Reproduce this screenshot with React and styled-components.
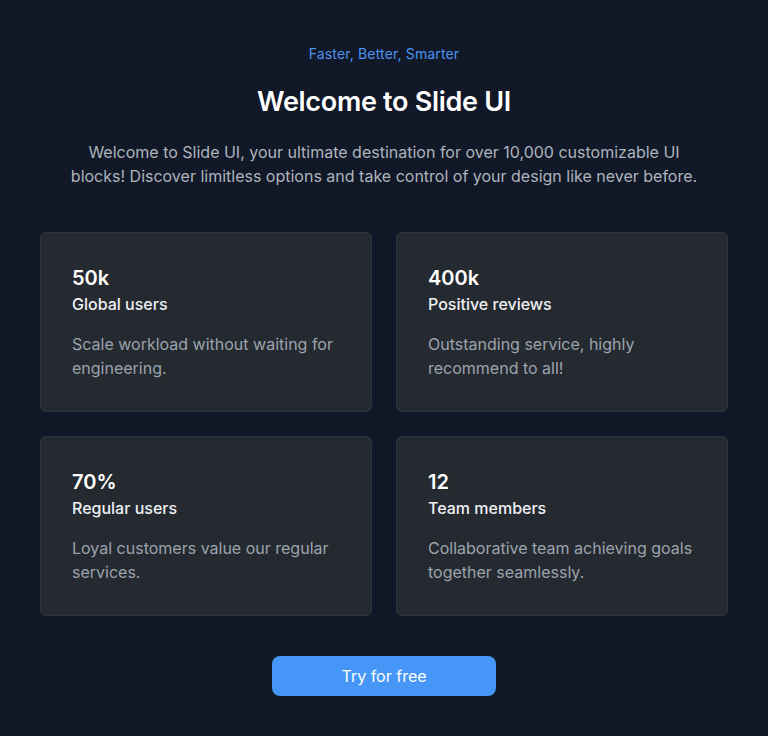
import React from 'react'
import styled, {createGlobalStyle} from "styled-components"

const GlobalStyle = createGlobalStyle`
    html, body {
        margin: 0;
        padding: 0;
        background: #111827;
    }
    body {
        font-family: Inter, "Noto Sans", "Liberation Sans", sans-serif;
        -webkit-font-smoothing: antialiased;
    }
`

const Section = styled.section`
    box-sizing: border-box;
    width: 768px;
    min-height: 736px;
    padding: 44px 40px 40px;
    display: flex;
    flex-direction: column;
    align-items: center;
    background: #111827;
`

const Tagline = styled.p`
    margin: 0;
    font-size: 14px;
    line-height: 20px;
    letter-spacing: 0.15px;
    color: #4b93ef;
`

const Title = styled.h1`
    margin: 20px 0 0;
    font-size: 27px;
    line-height: 36px;
    font-weight: 600;
    color: #ffffff;
    letter-spacing: -0.3px;
`

const Intro = styled.p`
    margin: 20px 0 0;
    max-width: 640px;
    text-align: center;
    font-size: 16px;
    line-height: 24px;
    color: #aeb4bd;
`

const Grid = styled.div`
    margin-top: 44px;
    width: 100%;
    display: grid;
    grid-template-columns: 1fr 1fr;
    gap: 24px;
`

const Card = styled.div`
    box-sizing: border-box;
    height: 180px;
    padding: 31px;
    background: #252a31;
    border: 1px solid #2e343c;
    border-radius: 6px;
`

const Stat = styled.div`
    font-size: 20px;
    line-height: 28px;
    font-weight: 600;
    color: #ffffff;
`

const Label = styled.div`
    font-size: 16px;
    line-height: 24px;
    font-weight: 450;
    color: #eef0f3;
`

const Description = styled.p`
    margin: 16px 0 0;
    font-size: 16px;
    line-height: 24px;
    color: #9ca3ad;
`

const Button = styled.button`
    margin-top: 40px;
    width: 224px;
    height: 40px;
    border: none;
    border-radius: 8px;
    background: #4596f6;
    color: #ffffff;
    font-family: inherit;
    font-size: 16px;
    cursor: pointer;
`

const stats = [
    {value: "50k", label: "Global users", text: "Scale workload without waiting for engineering."},
    {value: "400k", label: "Positive reviews", text: "Outstanding service, highly recommend to all!"},
    {value: "70%", label: "Regular users", text: "Loyal customers value our regular services."},
    {value: "12", label: "Team members", text: "Collaborative team achieving goals together seamlessly."},
]

const App = () => {
    return (
        <>
            <GlobalStyle />
            <Section>
                <Tagline>Faster, Better, Smarter</Tagline>
                <Title>Welcome to Slide UI</Title>
                <Intro>
                    Welcome to Slide UI, your ultimate destination for over 10,000 customizable UI blocks! Discover limitless options and take control of your design like never before.
                </Intro>
                <Grid>
                    {stats.map(s => (
                        <Card key={s.label}>
                            <Stat>{s.value}</Stat>
                            <Label>{s.label}</Label>
                            <Description>{s.text}</Description>
                        </Card>
                    ))}
                </Grid>
                <Button>Try for free</Button>
            </Section>
        </>
    )
}

export default App
